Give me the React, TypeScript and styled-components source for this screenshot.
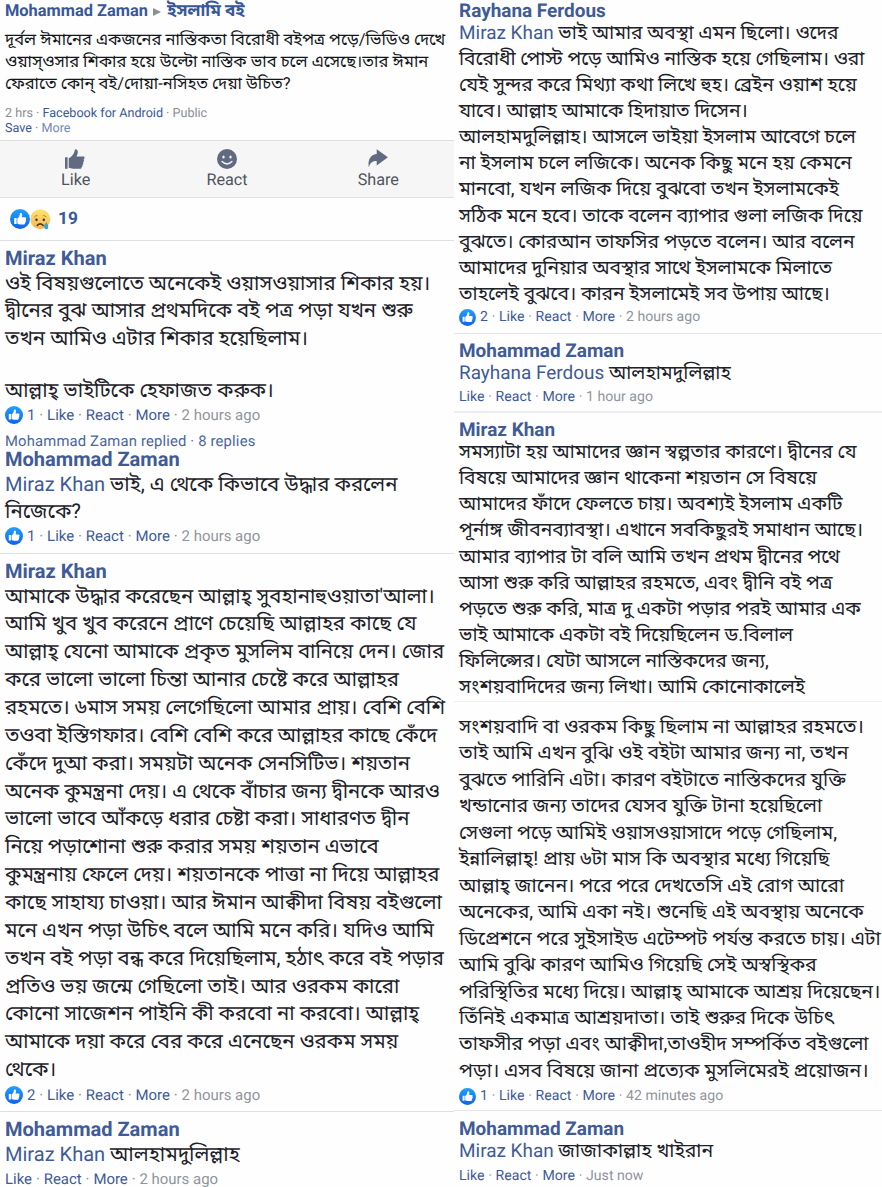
import styled, { createGlobalStyle, ThemeProvider } from "styled-components";

interface CommentData {
  name?: string;
  mention?: string;
  lines: string[];
  likes?: number;
  time?: string;
  size: number;
  pitch: number;
  pad: number;
  height: number;
  metaHeight?: number;
  border?: string;
}

const leftTheme = { name: 20.05, meta: 14.95, nameHeight: 23, badge: 18, dot: 11.7 };
const rightTheme = { name: 18.95, meta: 14.1, nameHeight: 19, badge: 17, dot: 11.1 };

const postLines = [
  "দূর্বল ঈমানের একজনের নাস্তিকতা বিরোধী বইপত্র পড়ে/ভিডিও দেখে",
  "ওয়াস্ওসার শিকার হয়ে উল্টো নাস্তিক ভাব চলে এসেছে।তার ঈমান",
  "ফেরাতে কোন্ বই/দোয়া-নসিহত দেয়া উচিত?",
];

const leftComments: CommentData[] = [
  {
    name: "Miraz Khan",
    lines: [
      "ওই বিষয়গুলোতে অনেকেই ওয়াসওয়াসার শিকার হয়।",
      "দ্বীনের বুঝ আসার প্রথমদিকে বই পত্র পড়া যখন শুরু",
      "তখন আমিও এটার শিকার হয়েছিলাম।",
      "",
      "আল্লাহ্ ভাইটিকে হেফাজত করুক।",
    ],
    likes: 1,
    time: "2 hours ago",
    size: 20.36,
    pitch: 27.7,
    pad: 5.5,
    height: 192,
  },
  {
    name: "Mohammad Zaman",
    mention: "Miraz Khan",
    lines: ["ভাই, এ থেকে কিভাবে উদ্ধার করলেন", "নিজেকে?"],
    likes: 1,
    time: "2 hours ago",
    size: 20.36,
    pitch: 27,
    pad: -1.8,
    height: 104,
    border: "1px solid #dfe0e3",
  },
  {
    name: "Miraz Khan",
    lines: [
      "আমাকে উদ্ধার করেছেন আল্লাহ্ সুবহানাহুওয়াতা'আলা।",
      "আমি খুব খুব করেনে প্রাণে চেয়েছি আল্লাহর কাছে যে",
      "আল্লাহ্ যেনো আমাকে প্রকৃত মুসলিম বানিয়ে দেন। জোর",
      "করে ভালো ভালো চিন্তা আনার চেষ্টে করে আল্লাহর",
      "রহমতে। ৬মাস সময় লেগেছিলো আমার প্রায়। বেশি বেশি",
      "তওবা ইস্তিগফার। বেশি বেশি করে আল্লাহর কাছে কেঁদে",
      "কেঁদে দুআ করা। সময়টা অনেক সেনসিটিভ। শয়তান",
      "অনেক কুমন্ত্রনা দেয়। এ থেকে বাঁচার জন্য দ্বীনকে আরও",
      "ভালো ভাবে আঁকড়ে ধরার চেষ্টা করা। সাধারণত দ্বীন",
      "নিয়ে পড়াশোনা শুরু করার সময় শয়তান এভাবে",
      "কুমন্ত্রনায় ফেলে দেয়। শয়তানকে পাত্তা না দিয়ে আল্লাহর",
      "কাছে সাহায্য চাওয়া। আর ঈমান আক্বীদা বিষয় বইগুলো",
      "মনে এখন পড়া উচিৎ বলে আমি মনে করি। যদিও আমি",
      "তখন বই পড়া বন্ধ করে দিয়েছিলাম, হঠাৎ করে বই পড়ার",
      "প্রতিও ভয় জন্মে গেছিলো তাই। আর ওরকম কারো",
      "কোনো সাজেশন পাইনি কী করবো না করবো। আল্লাহ্",
      "আমাকে দয়া করে বের করে এনেছেন ওরকম সময়",
      "থেকে।",
    ],
    likes: 2,
    time: "2 hours ago",
    size: 20.34,
    pitch: 27.87,
    pad: 5.5,
    height: 558,
    border: "1px solid #dfe0e3",
  },
  {
    name: "Mohammad Zaman",
    mention: "Miraz Khan",
    lines: ["আলহামদুলিল্লাহ"],
    time: "2 hours ago",
    size: 20.5,
    pitch: 27.8,
    pad: 5.5,
    height: 75,
  },
];

const rightComments: CommentData[] = [
  {
    name: "Rayhana Ferdous",
    mention: "Miraz Khan",
    lines: [
      "ভাই আমার অবস্থা এমন ছিলো। ওদের",
      "বিরোধী পোস্ট পড়ে আমিও নাস্তিক হয়ে গেছিলাম। ওরা",
      "যেই সুন্দর করে মিথ্যা কথা লিখে হুহ। ব্রেইন ওয়াশ হয়ে",
      "যাবে। আল্লাহ আমাকে হিদায়াত দিসেন।",
      "আলহামদুলিল্লাহ। আসলে ভাইয়া ইসলাম আবেগে চলে",
      "না ইসলাম চলে লজিকে। অনেক কিছু মনে হয় কেমনে",
      "মানবো, যখন লজিক দিয়ে বুঝবো তখন ইসলামকেই",
      "সঠিক মনে হবে। তাকে বলেন ব্যাপার গুলা লজিক দিয়ে",
      "বুঝতে। কোরআন তাফসির পড়তে বলেন। আর বলেন",
      "আমাদের দুনিয়ার অবস্থার সাথে ইসলামকে মিলাতে",
      "তাহলেই বুঝবে। কারন ইসলামেই সব উপায় আছে।",
    ],
    likes: 2,
    time: "2 hours ago",
    size: 19.19,
    pitch: 26.17,
    pad: 0.5,
    height: 334,
    metaHeight: 20.5,
    border: "1px solid #e5e6e9",
  },
  {
    name: "Mohammad Zaman",
    mention: "Rayhana Ferdous",
    lines: ["আলহামদুলিল্লাহ"],
    time: "1 hour ago",
    size: 19.3,
    pitch: 26.17,
    pad: 7.2,
    height: 79,
    border: "2px solid #ecedef",
  },
  {
    name: "Miraz Khan",
    lines: [
      "সমস্যাটা হয় আমাদের জ্ঞান স্বল্পতার কারণে। দ্বীনের যে",
      "বিষয়ে আমাদের জ্ঞান থাকেনা শয়তান সে বিষয়ে",
      "আমাদের ফাঁদে ফেলতে চায়। অবশ্যই ইসলাম একটি",
      "পূর্নাঙ্গ জীবনব্যাবস্থা। এখানে সবকিছুরই সমাধান আছে।",
      "আমার ব্যাপার টা বলি আমি তখন প্রথম দ্বীনের পথে",
      "আসা শুরু করি আল্লাহর রহমতে, এবং দ্বীনি বই পত্র",
      "পড়তে শুরু করি, মাত্র দু একটা পড়ার পরই আমার এক",
      "ভাই আমাকে একটা বই দিয়েছিলেন ড.বিলাল",
      "ফিলিপ্সের। যেটা আসলে নাস্তিকদের জন্য,",
      "সংশয়বাদিদের জন্য লিখা। আমি কোনোকালেই",
    ],
    size: 19.24,
    pitch: 26.13,
    pad: 7,
    height: 289,
    border: "1px solid #f0f0f1",
  },
  {
    lines: [
      "সংশয়বাদি বা ওরকম কিছু ছিলাম না আল্লাহর রহমতে।",
      "তাই আমি এখন বুঝি ওই বইটা আমার জন্য না, তখন",
      "বুঝতে পারিনি এটা। কারণ বইটাতে নাস্তিকদের যুক্তি",
      "খন্ডানোর জন্য তাদের যেসব যুক্তি টানা হয়েছিলো",
      "সেগুলা পড়ে আমিই ওয়াসওয়াসাদে পড়ে গেছিলাম,",
      "ইন্নালিল্লাহ্! প্রায় ৬টা মাস কি অবস্থার মধ্যে গিয়েছি",
      "আল্লাহ্ জানেন। পরে পরে দেখতেসি এই রোগ আরো",
      "অনেকের, আমি একা নই। শুনেছি এই অবস্থায় অনেকে",
      "ডিপ্রেশনে পরে সুইসাইড এটেম্পট পর্যন্ত করতে চায়। এটা",
      "আমি বুঝি কারণ আমিও গিয়েছি সেই অস্বস্থিকর",
      "পরিস্থিতির মধ্যে দিয়ে। আল্লাহ্ আমাকে আশ্রয় দিয়েছেন।",
      "তিঁনিই একমাত্র আশ্রয়দাতা। তাই শুরুর দিকে উচিৎ",
      "তাফসীর পড়া এবং আক্বীদা,তাওহীদ সম্পর্কিত বইগুলো",
      "পড়া। এসব বিষয়ে জানা প্রত্যেক মুসলিমেরই প্রয়োজন।",
    ],
    likes: 1,
    time: "42 minutes ago",
    size: 19.43,
    pitch: 26.46,
    pad: 12,
    height: 409,
    metaHeight: 24,
    border: "1px solid #e5e6e9",
  },
  {
    name: "Mohammad Zaman",
    mention: "Miraz Khan",
    lines: ["জাজাকাল্লাহ খাইরান"],
    time: "Just now",
    size: 19.45,
    pitch: 26.2,
    pad: 8,
    height: 76,
    metaHeight: 23,
  },
];

function LikeBadge({ size }: { size: number }) {
  return (
    <svg width={size} height={size} viewBox="0 0 20 20">
      <defs>
        <linearGradient id="likeFill" x1="0" y1="0" x2="0" y2="1">
          <stop offset="0" stopColor="#1fa2fb" />
          <stop offset="1" stopColor="#1062ea" />
        </linearGradient>
      </defs>
      <circle cx="10" cy="10" r="10" fill="url(#likeFill)" />
      <path
        fill="#fff"
        d="M4.200 9h2.400v6H4.200zM7.300 9.400c1.400-.9 2.400-2 2.500-4.400 0-.9.500-1.200 1.200-1.100 1 .2 1.400 1.300 1.200 2.600l-.4 1.800h3.200c1.300 0 1.500 1.500.7 2 .6.500.5 1.500-.2 1.900.4.600.1 1.500-.5 1.700.2.800-.3 1.500-1.300 1.500h-3.200c-1.200 0-2.200-.3-3.200-.9z"
      />
    </svg>
  );
}

function SadFace() {
  return (
    <svg width="21" height="21" viewBox="0 0 21 21">
      <defs>
        <linearGradient id="sadFill" x1="0" y1="0" x2="0" y2="1">
          <stop offset="0" stopColor="#fee36f" />
          <stop offset="1" stopColor="#f5b655" />
        </linearGradient>
      </defs>
      <circle cx="10.3" cy="10.3" r="10" fill="url(#sadFill)" />
      <path d="M4.2 8.2q1.6-1.900 3.200-1.700M13.200 6.500q1.600-.2 3.200 1.700" stroke="#b9832b" strokeWidth="1" fill="none" />
      <ellipse cx="6.500" cy="10.800" rx="1.200" ry="1.400" fill="#413226" />
      <ellipse cx="13.800" cy="10.800" rx="1.200" ry="1.400" fill="#413226" />
      <path d="M7.200 16.400q3-3 6 0" stroke="#5e3417" strokeWidth="1.500" strokeLinecap="round" fill="none" />
      <path d="M16.300 13.200c1.200 1.800 2 2.900 2 4.200 0 1.900-1 2.900-2.100 2.900s-2.100-1-2.100-2.800c0-1.400.9-2.500 2.200-4.300z" fill="#36a4d3" />
    </svg>
  );
}

function ThumbIcon() {
  return (
    <svg width="21" height="20" viewBox="0 0 21 20" fill="#626a81">
      <path d="M0 8.200h2.600v11.600H0zM3.700 9.300c2.800-1.600 5.300-3.600 6.100-8.300.3-1.500 3-.8 3 1.900 0 1.500-.7 3-1.200 4.500h7c1.300 0 1.300 2.800-.1 3 .8.400.6 2.600-.5 2.800.7.500.4 2.500-.7 2.600.5.500.1 2.200-.8 2.400.2.900-.3 1.600-1.300 1.600H7.900l-4.200-1z" />
    </svg>
  );
}

function SmileIcon() {
  return (
    <svg width="20" height="20" viewBox="0 0 20 20">
      <circle cx="10" cy="10" r="10" fill="#626a81" />
      <ellipse cx="6.500" cy="8" rx="1.200" ry="1.600" fill="#f6f6f7" />
      <ellipse cx="13.500" cy="8" rx="1.200" ry="1.600" fill="#f6f6f7" />
      <path d="M5 12.600q5 4.600 10 0" stroke="#f6f6f7" strokeWidth="1.400" strokeLinecap="round" fill="none" />
    </svg>
  );
}

function ShareIcon() {
  return (
    <svg width="20" height="20" viewBox="0 0 20 20" fill="#626a81">
      <path d="M8.700.2 19.900 8.300 8.700 16.600v-4.700C4.500 11.900 2 13.700.8 18.200-.6 11 2.800 5.600 8.700 5.100z" />
    </svg>
  );
}

function Comment({ data, badge }: { data: CommentData; badge: number }) {
  return (
    <CommentItem $pad={data.pad} $height={data.height} $border={data.border}>
      {data.name && <Name>{data.name}</Name>}
      {data.lines.map((line, i) => (
        <Line key={i} $size={data.size} $pitch={line ? data.pitch : 24}>
          {i === 0 && data.mention && <Mention>{data.mention} </Mention>}
          {line}
        </Line>
      ))}
      {data.time && (
        <Meta $height={data.metaHeight || 22}>
          {data.likes && (
            <Likes>
              <LikeBadge size={badge} />
              {data.likes}
              <Dot>·</Dot>
            </Likes>
          )}
          Like<Dot>·</Dot>React<Dot>·</Dot>More<Dot>·</Dot>
          <Time>{data.time}</Time>
        </Meta>
      )}
    </CommentItem>
  );
}

function App() {
  return (
    <Page>
      <GlobalStyle />
      <ThemeProvider theme={leftTheme}>
        <Column $width={454}>
          <Post>
            <PostTitle>
              Mohammad Zaman <Arrow viewBox="0 0 8 8"><path d="M0 0 8 4 0 8z" /></Arrow> <span>ইসলামি বই</span>
            </PostTitle>
            <PostBody>
              {postLines.map((line) => (
                <div key={line}>{line}</div>
              ))}
            </PostBody>
            <PostMeta>
              <div>
                2 hrs · <a>Facebook for Android</a> · Public
              </div>
              <div>
                <a>Save</a> · <More>More</More>
              </div>
            </PostMeta>
          </Post>
          <Actions>
            <Action>
              <ThumbIcon />
              Like
            </Action>
            <Action>
              <SmileIcon />
              React
            </Action>
            <Action>
              <ShareIcon />
              Share
            </Action>
          </Actions>
          <Reactions>
            <LikeBadge size={20} />
            <SadFace />
            <strong>19</strong>
          </Reactions>
          <Comment data={leftComments[0]} badge={leftTheme.badge} />
          <Replied>Mohammad Zaman replied · 8 replies</Replied>
          {leftComments.slice(1).map((c, i) => (
            <Comment key={i} data={c} badge={leftTheme.badge} />
          ))}
        </Column>
      </ThemeProvider>
      <ThemeProvider theme={rightTheme}>
        <Column $width={428}>
          {rightComments.map((c, i) => (
            <Comment key={i} data={c} badge={rightTheme.badge} />
          ))}
        </Column>
      </ThemeProvider>
    </Page>
  );
}

const GlobalStyle = createGlobalStyle`
  * {
    box-sizing: border-box;
  }
  body {
    margin: 0;
    background: #fff;
    overflow: hidden;
    font-family: Roboto, "Noto Sans Bengali", "Noto Sans", sans-serif;
    text-rendering: geometricPrecision;
  }
`;

const Page = styled.main`
  display: flex;
  width: 882px;
  height: 1187px;
  overflow: hidden;
  background: #fefefe;
`;

const Column = styled.section<{ $width: number }>`
  width: ${({ $width }) => $width}px;
  flex: none;
  display: flex;
  flex-direction: column;
`;

const Post = styled.article`
  height: 140px;
  padding: 0 5px;
  white-space: nowrap;
`;

const PostTitle = styled.h1`
  margin: 0;
  height: 30px;
  line-height: 22px;
  font-size: 16.4px;
  font-weight: 700;
  color: #385898;
  span {
    font-size: 17.1px;
  }
`;

const Arrow = styled.svg`
  width: 8px;
  height: 8px;
  margin: 0 1.5px;
  fill: #8d8f94;
`;

const PostBody = styled.div`
  height: 75.5px;
  font-size: 16.54px;
  line-height: 22px;
  color: #14161a;
`;

const PostMeta = styled.div`
  font-size: 12.6px;
  line-height: 15.3px;
  color: #8a8d93;
  a {
    color: #385898;
  }
`;

const More = styled.span`
  color: #7289b8;
`;

const Actions = styled.nav`
  display: flex;
  height: 58px;
  border-top: 1px solid #dcdde0;
  border-bottom: 1px solid #e0e1e4;
  background: #f6f6f7;
`;

const Action = styled.div`
  flex: 1;
  display: flex;
  flex-direction: column;
  align-items: center;
  padding-top: 8px;
  font-size: 16.2px;
  line-height: 21px;
  color: #50545d;
`;

const Reactions = styled.div`
  display: flex;
  align-items: center;
  height: 43px;
  padding-left: 10px;
  border-bottom: 1px solid #dfe0e3;
  strong {
    margin-left: 7px;
    font-size: 17.3px;
    color: #3b5998;
  }
`;

const Replied = styled.div`
  height: 17px;
  padding-left: 5px;
  font-size: 14.8px;
  letter-spacing: 0.17px;
  line-height: 17px;
  color: #4a669f;
`;

const CommentItem = styled.article<{ $pad: number; $height: number; $border?: string }>`
  flex: none;
  height: ${({ $height }) => $height}px;
  padding-left: 5px;
  border-bottom: ${({ $border }) => $border || "none"};
  color: #1d2129;
  white-space: nowrap;
  &::before {
    content: "";
    display: block;
    height: ${({ $pad }) => Math.max($pad, 0)}px;
    margin-top: ${({ $pad }) => Math.min($pad, 0)}px;
  }
`;

const Name = styled.h2`
  margin: 0;
  height: ${({ theme }) => theme.nameHeight}px;
  line-height: ${({ theme }) => theme.nameHeight}px;
  font-size: ${({ theme }) => theme.name}px;
  font-weight: 700;
  color: #3f5b98;
`;

const Line = styled.div<{ $size: number; $pitch: number }>`
  height: ${({ $pitch }) => $pitch}px;
  line-height: ${({ $pitch }) => $pitch}px;
  font-size: ${({ $size }) => $size}px;
`;

const Mention = styled.span`
  font-size: ${({ theme }) => theme.name}px;
  color: #3f5b98;
`;

const Meta = styled.div<{ $height: number }>`
  display: flex;
  align-items: center;
  height: ${({ $height }) => $height}px;
  font-size: ${({ theme }) => theme.meta}px;
  color: #3f5b98;
`;

const Likes = styled.span`
  display: flex;
  align-items: center;
  svg {
    margin-right: 4px;
  }
`;

const Dot = styled.span`
  width: ${({ theme }) => theme.dot}px;
  text-align: center;
  color: #90949c;
`;

const Time = styled.span`
  color: #90949c;
`;

export default App;
